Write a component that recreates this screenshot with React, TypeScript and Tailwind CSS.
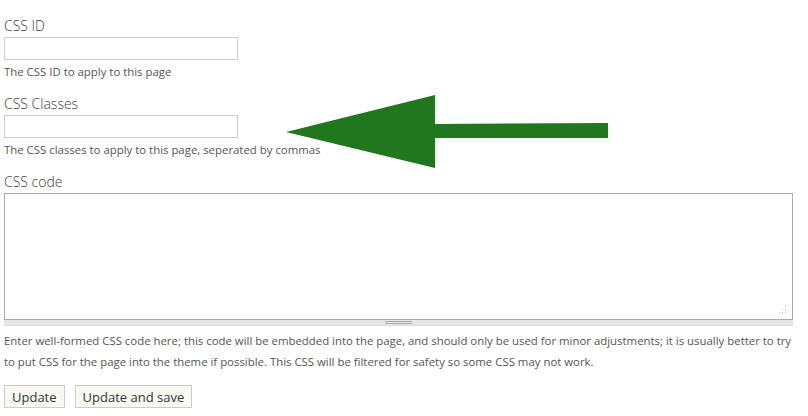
import React from 'react';

const font = { fontFamily: '"Open Sans", "Liberation Sans", sans-serif' };

const Arrow: React.FC = () => (
  <svg className="absolute left-[286px] top-[95px]" width="324" height="75" viewBox="286 95 324 75">
    <polygon points="286,132 435,95 435,124 608,123 608,138 435,138 435,168" fill="#20771e" />
  </svg>
);

export default function App() {
  return (
    <div className="relative w-[808px] h-[416px] bg-white text-[#555]" style={font}>
      <div className="px-1 pt-[16px]">
        <label className="block text-[14px] leading-[20px] font-light text-[#3a3a3a]">CSS ID</label>
        <input className="block w-[234px] h-[23px] border border-[#ccc] bg-white mt-[1px]" />
        <p className="text-[11.4px] leading-[15px] mt-[4px]">The CSS ID to apply to this page</p>

        <label className="block text-[14px] leading-[20px] font-light text-[#3a3a3a] mt-[15px]">CSS Classes</label>
        <input className="block w-[234px] h-[23px] border border-[#ccc] bg-white mt-[1px]" />
        <p className="text-[11.4px] leading-[15px] mt-[4px]">The CSS classes to apply to this page, seperated by commas</p>

        <label className="block text-[14px] leading-[20px] font-light text-[#3a3a3a] mt-[15px]">CSS code</label>
        <div className="w-[789px] mt-[1px]">
          <div className="relative h-[127px] border border-[#aaa] bg-white">
            <svg className="absolute right-[5px] bottom-[5px]" width="9" height="9" viewBox="0 0 9 9">
              <g fill="#bbb">
                <rect x="7" y="1" width="1" height="1" />
                <rect x="4" y="4" width="1" height="1" />
                <rect x="7" y="4" width="1" height="1" />
                <rect x="1" y="7" width="1" height="1" />
                <rect x="4" y="7" width="1" height="1" />
                <rect x="7" y="7" width="1" height="1" />
              </g>
            </svg>
          </div>
          <div className="h-[6px] bg-[#e6e6e6] border-b border-[#ddd] flex flex-col items-center justify-center gap-[1px]">
            <div className="w-[27px] h-px bg-[#aaa]" />
            <div className="w-[27px] h-px bg-[#aaa]" />
          </div>
        </div>
        <p className="text-[11.4px] leading-[21px] mt-[4px] pr-[8px]">
          Enter well-formed CSS code here; this code will be embedded into the page, and should only be used for minor adjustments; it is usually better to try to put CSS for the page into the theme if possible. This CSS will be filtered for safety so some CSS may not work.
        </p>
        <div className="flex gap-[10px] mt-[13px]">
          <button className="h-[23px] px-[7px] border border-[#ccc] bg-[#faf8f3] text-[13px] leading-[20px] text-[#333]">Update</button>
          <button className="h-[23px] px-[7px] border border-[#ccc] bg-[#faf8f3] text-[13px] leading-[20px] text-[#333]">Update and save</button>
        </div>
      </div>
      <Arrow />
    </div>
  );
}
